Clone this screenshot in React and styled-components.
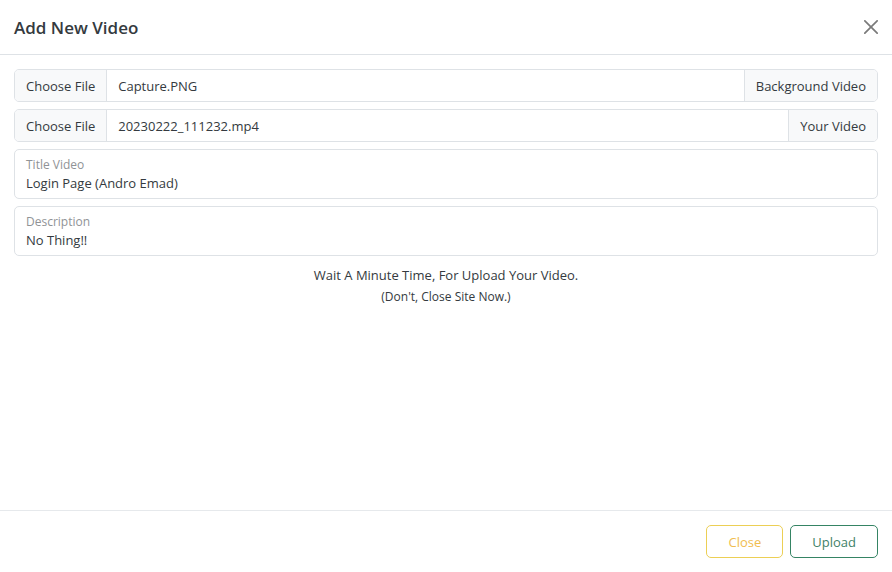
import React from "react";
import styled, { createGlobalStyle } from "styled-components";

const Global = createGlobalStyle`
  *, *::before, *::after { box-sizing: border-box; }
  body {
    margin: 0;
    background: #fff;
    color: #343a40;
    font: 13px/21px "Open Sans", "Noto Sans", sans-serif;
  }
  button, input { font: inherit; color: inherit; }
`;

const Dialog = styled.form`
  display: flex;
  flex-direction: column;
  min-height: 100vh;
`;

const Header = styled.header`
  display: flex;
  align-items: center;
  justify-content: space-between;
  padding: 14px;
  border-bottom: 1px solid #dee2e6;
`;

const Title = styled.h1`
  margin: 0;
  padding-top: 2px;
  font-size: 17px;
  line-height: 24px;
  font-weight: 600;
`;

const CloseIcon = styled.button`
  display: flex;
  padding: 0;
  border: 0;
  background: none;
  color: #7a7a7a;
  cursor: pointer;
`;

const Body = styled.main`
  flex: 1;
  display: flex;
  flex-direction: column;
  gap: 7px;
  padding: 14px;
`;

const Group = styled.div`
  position: relative;
  display: flex;
  border: 1px solid #dee2e6;
  border-radius: 5px;
  overflow: hidden;
`;

const FileInput = styled.input`
  position: absolute;
  width: 1px;
  height: 1px;
  opacity: 0;
`;

const Choose = styled.label`
  padding: 6px 11px 4px;
  background: #f8f9fa;
  border-right: 1px solid #dee2e6;
  cursor: pointer;
`;

const FileName = styled.span`
  flex: 1;
  min-width: 0;
  padding: 6px 11px 4px;
`;

const Addon = styled.label`
  padding: 6px 11px 4px;
  background: #f8f9fa;
  border-left: 1px solid #dee2e6;
`;

const Field = styled.div`
  display: flex;
  flex-direction: column;
  padding: 6px 11px 5px;
  border: 1px solid #dee2e6;
  border-radius: 5px;
`;

const FieldLabel = styled.label`
  font-size: 12px;
  line-height: 18px;
  color: #909396;
`;

const TextInput = styled.input`
  width: 100%;
  height: 19px;
  padding: 0;
  border: 0;
  outline: 0;
  background: none;
  line-height: 19px;
`;

const Notice = styled.p`
  margin: 0;
  padding-top: 2px;
  text-align: center;
`;

const Small = styled.small`
  display: block;
  font-size: 12px;
`;

const Footer = styled.footer`
  display: flex;
  justify-content: flex-end;
  gap: 7px;
  padding: 14px;
  border-top: 1px solid #e6e9ec;
`;

const Action = styled.button`
  padding: 6px 21px 4px;
  border: 1px solid ${(p) => p.$border};
  border-radius: 5px;
  background: #fff;
  color: ${(p) => p.$color};
  cursor: pointer;
`;

function FileRow({ id, name, label }) {
  return (
    <Group>
      <FileInput type="file" id={id} />
      <Choose htmlFor={id}>Choose File</Choose>
      <FileName>{name}</FileName>
      <Addon htmlFor={id}>{label}</Addon>
    </Group>
  );
}

function TextRow({ id, label, value }) {
  return (
    <Field>
      <FieldLabel htmlFor={id}>{label}</FieldLabel>
      <TextInput id={id} defaultValue={value} />
    </Field>
  );
}

export default function App() {
  return (
    <>
      <Global />
      <Dialog onSubmit={(e) => e.preventDefault()}>
        <Header>
          <Title>Add New Video</Title>
          <CloseIcon type="button" aria-label="Close">
            <svg width="14" height="14" viewBox="0 0 14 14" fill="none" stroke="currentColor" strokeWidth="1.7" strokeLinecap="round">
              <path d="M.85 .85 13.15 13.15M13.15 .85 .85 13.15" />
            </svg>
          </CloseIcon>
        </Header>
        <Body>
          <FileRow id="background" name="Capture.PNG" label="Background Video" />
          <FileRow id="video" name="20230222_111232.mp4" label="Your Video" />
          <TextRow id="title" label="Title Video" value="Login Page (Andro Emad)" />
          <TextRow id="description" label="Description" value="No Thing!!" />
          <Notice>
            Wait A Minute Time, For Upload Your Video.
            <Small>(Don't, Close Site Now.)</Small>
          </Notice>
        </Body>
        <Footer>
          <Action type="button" $color="#f0bd50" $border="#eccf55">Close</Action>
          <Action type="submit" $color="#3f8268" $border="#358464">Upload</Action>
        </Footer>
      </Dialog>
    </>
  );
}
